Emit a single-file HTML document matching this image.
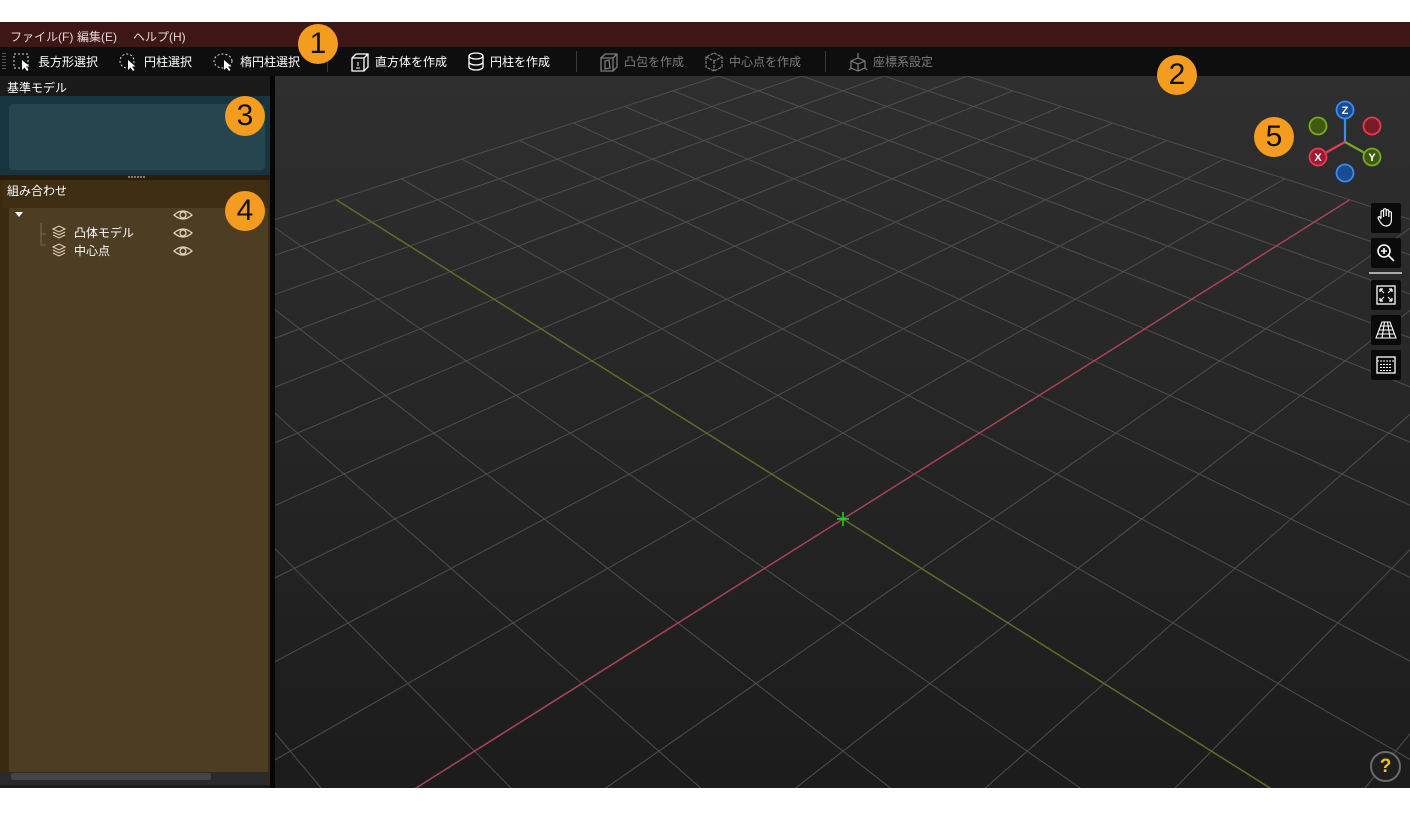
<!DOCTYPE html>
<html style="overflow:hidden;width:1410px;height:819px"><head><meta charset="utf-8"><style>
*{margin:0;padding:0;box-sizing:border-box}
html,body{overflow:hidden}
body{width:1410px;height:819px;background:#fff;position:relative;font-family:"Liberation Sans","Noto Sans CJK JP",sans-serif;font-size:12px}
.abs{position:absolute}
#menu{left:0;top:22px;width:1410px;height:25px;background:#3e1616;color:#e6d6d6}
#menu span{position:absolute;top:6px}
#tb{left:0;top:47px;width:1410px;height:29px;background:#0e0e0e;color:#fff}
#tb .it{position:absolute;top:6px;height:18px;line-height:16px;display:flex;align-items:center;gap:3px;white-space:nowrap}
#tb .dis{color:#7d7d7d}
.sep{position:absolute;top:4px;width:1px;height:21px;background:#3a3a3a}
#left{left:0;top:76px;width:270px;height:712px;background:#1a1a1a;overflow:hidden}
#vp{left:275px;top:76px;width:1135px;height:712px;background:linear-gradient(#2f2f2f,#1c1c1c);overflow:hidden}
.badge{position:absolute;width:40px;height:40px;border-radius:50%;background:#f39c1f;color:#111;font-size:30px;line-height:40px;text-align:center;font-family:"Liberation Sans",sans-serif}
.btn{position:absolute;left:1371px;width:30px;height:30px;background:#0a0a0a;border-radius:2px}
</style></head><body>
<div id="menu" class="abs"><span style="left:10px">ファイル(F)</span><span style="left:77px">編集(E)</span><span style="left:133px">ヘルプ(H)</span></div>
<div id="tb" class="abs">
<div class="abs" style="left:2px;top:6px;width:4px;height:17px;background:repeating-linear-gradient(#555 0 1px,transparent 1px 3px)"></div>
<div class="it" style="left:13px"><svg width="22" height="18"><rect x="1" y="1" width="14" height="14" fill="none" stroke="#ddd" stroke-dasharray="2 2"/><path d="M9 7 L9 17 L11.5 14.5 L14 18 L15.5 17 L13 13.5 L16.5 13.5 Z" fill="#fff"/></svg>長方形選択</div>
<div class="it" style="left:119px"><svg width="22" height="18"><circle cx="8" cy="8" r="7" fill="none" stroke="#ddd" stroke-dasharray="2 2"/><path d="M9 7 L9 17 L11.5 14.5 L14 18 L15.5 17 L13 13.5 L16.5 13.5 Z" fill="#fff"/></svg>円柱選択</div>
<div class="it" style="left:213px"><svg width="24" height="18"><ellipse cx="10" cy="8" rx="9" ry="7" fill="none" stroke="#ddd" stroke-dasharray="2 2"/><path d="M11 7 L11 17 L13.5 14.5 L16 18 L17.5 17 L15 13.5 L18.5 13.5 Z" fill="#fff"/></svg>楕円柱選択</div>
<div class="sep" style="left:327px"></div>
<div class="it" style="left:350px"><svg width="22" height="20"><path d="M2 6 L6 2 L18 2 L18 15 L14 19 L2 19 Z M2 6 L14 6 L14 19 M14 6 L18 2" fill="none" stroke="#fff" stroke-width="1.3"/><path d="M8 10 V14 M6 16 H10" stroke="#fff"/></svg>直方体を作成</div>
<div class="it" style="left:467px"><svg width="20" height="20"><ellipse cx="9" cy="4" rx="7" ry="3" fill="none" stroke="#fff" stroke-width="1.3"/><path d="M2 4 V15 A7 3 0 0 0 16 15 V4 M2 10 A7 3 0 0 0 16 10" fill="none" stroke="#fff" stroke-width="1.3"/></svg>円柱を作成</div>
<div class="sep" style="left:576px"></div>
<div class="it dis" style="left:599px"><svg width="22" height="20"><path d="M2 6 L6 2 L18 2 L18 15 L14 19 L2 19 Z M2 6 L14 6 L14 19 M14 6 L18 2 M6 9 L10 8 L11 16 L6 17 Z" fill="none" stroke="#7d7d7d" stroke-width="1.3"/></svg>凸包を作成</div>
<div class="it dis" style="left:704px"><svg width="22" height="20"><path d="M10 1 L18 5 L18 15 L10 19 L2 15 L2 5 Z M2 5 L10 9 L18 5 M10 9 V19" fill="none" stroke="#7d7d7d" stroke-width="1.2" stroke-dasharray="3 1"/></svg>中心点を作成</div>
<div class="sep" style="left:825px"></div>
<div class="it dis" style="left:848px"><svg width="22" height="20"><path d="M10 1 V6 M10 6 L17 9 L17 16 L10 19 L3 16 L3 9 Z M3 9 L10 12 L17 9 M10 12 V19 M3 16 L1 18 M17 16 L19 18" fill="none" stroke="#7d7d7d" stroke-width="1.2"/></svg>座標系設定</div>
</div>

<div id="left" class="abs">
<div class="abs" style="left:7px;top:3px;color:#fff">基準モデル</div>
<div class="abs" style="left:0;top:20px;width:270px;height:79px;background:#173540"></div>
<div class="abs" style="left:9px;top:28px;width:256px;height:66px;background:#26464f;border-radius:4px"></div>
<div class="abs" style="left:0;top:99px;width:270px;height:5px;background:#2b1c08"></div>
<div class="abs" style="left:128px;top:100px;width:17px;height:2px;background:repeating-linear-gradient(90deg,#8a7a60 0 2px,transparent 2px 3px)"></div>
<div class="abs" style="left:0;top:104px;width:270px;height:605px;background:#3a2a10"></div>
<div class="abs" style="left:3px;top:104px;width:264px;height:28px;background:#3f2e14;border-radius:4px 4px 0 0"></div>
<div class="abs" style="left:7px;top:106px;color:#fff">組み合わせ</div>
<div class="abs" style="left:9px;top:132px;width:259px;height:564px;background:#4d3d22"></div>
<div class="abs" style="left:0;top:696px;width:268px;height:13px;background:#2a2a2a"></div>
<div class="abs" style="left:11px;top:697px;width:200px;height:7px;background:#454545;border-radius:2px"></div>
<svg class="abs" style="left:0;top:120px" width="270" height="70">
<path d="M15 16 L23 16 L19 21 Z" fill="#fff"/>
<path d="M41 27 V49 H46 M41 38 H46" stroke="#7a6a50" fill="none"/>
<g fill="none" stroke="#e6d6c0" stroke-width="1">
<path d="M53 33 L59 30 L65 33 L59 36 Z M53 36 L59 39 L65 36 M53 39 L59 42 L65 39"/>
<path d="M53 51 L59 48 L65 51 L59 54 Z M53 54 L59 57 L65 54 M53 57 L59 60 L65 57"/>
<g stroke-width="1.3"><path d="M174 19 Q183 11 192 19 Q183 27 174 19 Z"/><circle cx="183" cy="19" r="3"/>
<path d="M174 37 Q183 29 192 37 Q183 45 174 37 Z"/><circle cx="183" cy="37" r="3"/>
<path d="M174 55 Q183 47 192 55 Q183 63 174 55 Z"/><circle cx="183" cy="55" r="3"/></g>
</g>
<text x="74" y="41" fill="#fff" font-size="12" font-family="Liberation Sans,Noto Sans CJK JP,sans-serif">凸体モデル</text>
<text x="74" y="59" fill="#fff" font-size="12" font-family="Liberation Sans,Noto Sans CJK JP,sans-serif">中心点</text>
</svg>
</div>
<div class="abs" style="left:270px;top:76px;width:5px;height:712px;background:#050505"></div>

<div id="vp" class="abs"><svg id="grid" width="1135" height="712" style="position:absolute;left:0;top:0"></svg></div>

<svg class="abs" style="left:1300px;top:95px" width="90" height="95">
<path d="M45 47 V22" stroke="#3a8cf0" stroke-width="2.2"/><path d="M45 47 L18 62" stroke="#e83a50" stroke-width="2.2"/><path d="M45 47 L72 62" stroke="#7aaa20" stroke-width="2.2"/>
<circle cx="18" cy="31" r="8.5" fill="#3e5a12" stroke="#7aaa20" stroke-width="1.8"/>
<circle cx="72" cy="31" r="8.5" fill="#7a1a28" stroke="#e83a50" stroke-width="1.8"/>
<circle cx="45" cy="78" r="8.5" fill="#1a4a90" stroke="#3a8cf0" stroke-width="1.8"/>
<circle cx="45" cy="15" r="8.5" fill="#1a4a90" stroke="#3a8cf0" stroke-width="1.8"/>
<circle cx="18" cy="62" r="8.5" fill="#9a1a30" stroke="#e83a50" stroke-width="1.8"/>
<circle cx="72" cy="62" r="8.5" fill="#3e5a12" stroke="#7aaa20" stroke-width="1.8"/>
<g fill="#fff" font-size="11" font-weight="bold" text-anchor="middle" font-family="Liberation Sans,sans-serif"><text x="45" y="19">Z</text><text x="18" y="66">X</text><text x="72" y="66">Y</text></g>
</svg>

<div class="btn" style="top:203px"><svg width="30" height="30"><path d="M10 15 V9 a1.3 1.3 0 0 1 2.6 0 V14 M12.6 13 V7 a1.3 1.3 0 0 1 2.6 0 V13 M15.2 13 V8 a1.3 1.3 0 0 1 2.6 0 V14 M17.8 14 V10 a1.3 1.3 0 0 1 2.6 0 V17 Q20 23 15 23 Q11 23 8 17 L7 15 a1.2 1.2 0 0 1 2 -1 L10 16" fill="none" stroke="#fff" stroke-width="1.2"/></svg></div>
<div class="btn" style="top:238px"><svg width="30" height="30"><circle cx="13" cy="13" r="6" fill="none" stroke="#fff" stroke-width="1.6"/><path d="M17.5 17.5 L23 23 M10 13 H16 M13 10 V16" stroke="#fff" stroke-width="1.6"/></svg></div>
<div class="abs" style="left:1369px;top:272px;width:33px;height:2px;background:#aaa"></div>
<div class="btn" style="top:280px"><svg width="30" height="30"><rect x="6" y="6" width="18" height="18" fill="none" stroke="#fff" stroke-width="1.3"/><path d="M9 9 L13 13 M9 9 H12 M9 9 V12 M21 9 L17 13 M21 9 H18 M21 9 V12 M9 21 L13 17 M9 21 H12 M9 21 V18 M21 21 L17 17 M21 21 H18 M21 21 V18" stroke="#fff" stroke-width="1.2" fill="none"/></svg></div>
<div class="btn" style="top:315px"><svg width="30" height="30"><path d="M11 7 H19 L25 23 H5 Z M8 15 H22 M6.5 19 H23.5 M9.5 11 H20.5 M13.5 7 L11 23 M16.5 7 L19 23" stroke="#fff" stroke-width="1.1" fill="none"/></svg></div>
<div class="btn" style="top:350px"><svg width="30" height="30"><rect x="6" y="7" width="18" height="16" fill="none" stroke="#fff" stroke-width="1.3"/><path d="M6 11 H24 M9 14.5 H21 M9 17.5 H21 M9 20.5 H21" stroke="#fff" stroke-width="1" stroke-dasharray="2 1"/></svg></div>

<div class="abs" style="left:1370px;top:751px;width:31px;height:31px;border-radius:50%;border:2px solid #6a6a6a;background:#1e1e1e;color:#f0c020;font-size:19px;font-weight:bold;text-align:center;line-height:27px">?</div>

<div class="badge" style="left:298px;top:24px">1</div>
<div class="badge" style="left:1157px;top:55px">2</div>
<div class="badge" style="left:225px;top:96px">3</div>
<div class="badge" style="left:225px;top:191px">4</div>
<div class="badge" style="left:1254px;top:117px">5</div>

<script>
(function(){
var svg=document.getElementById('grid');
var cx=843-275,cy=519-76,f=1225,c=0.777,sn=0.63,s=0.0862,r=Math.SQRT1_2,N=10;
function P(X,Y){var a=(X-Y)*r,d=(X+Y)*r,z=1+d*c;return [cx+f*a/z,cy-f*d*sn/z];}
var h='';
function ln(p,q,col,w){h+='<line x1="'+p[0].toFixed(1)+'" y1="'+p[1].toFixed(1)+'" x2="'+q[0].toFixed(1)+'" y2="'+q[1].toFixed(1)+'" stroke="'+col+'" stroke-width="'+w+'"/>';}
for(var i=-N;i<=N;i++){if(i==0)continue;
ln(P(i*s,-N*s),P(i*s,N*s),'#4e4e4e',1);
ln(P(-N*s,i*s),P(N*s,i*s),'#4e4e4e',1);}
ln(P(0,-N*s),P(0,N*s),'#5a7028',1.5);
ln(P(-N*s,0),P(N*s,0),'#a84456',1.5);
h+='<path d="M'+(cx-6)+' '+cy+' H'+(cx+6)+' M'+cx+' '+(cy-7)+' V'+(cy+7)+'" stroke="#18e018" stroke-width="1.5"/>';
svg.innerHTML=h;
})();
</script>
</body></html>
